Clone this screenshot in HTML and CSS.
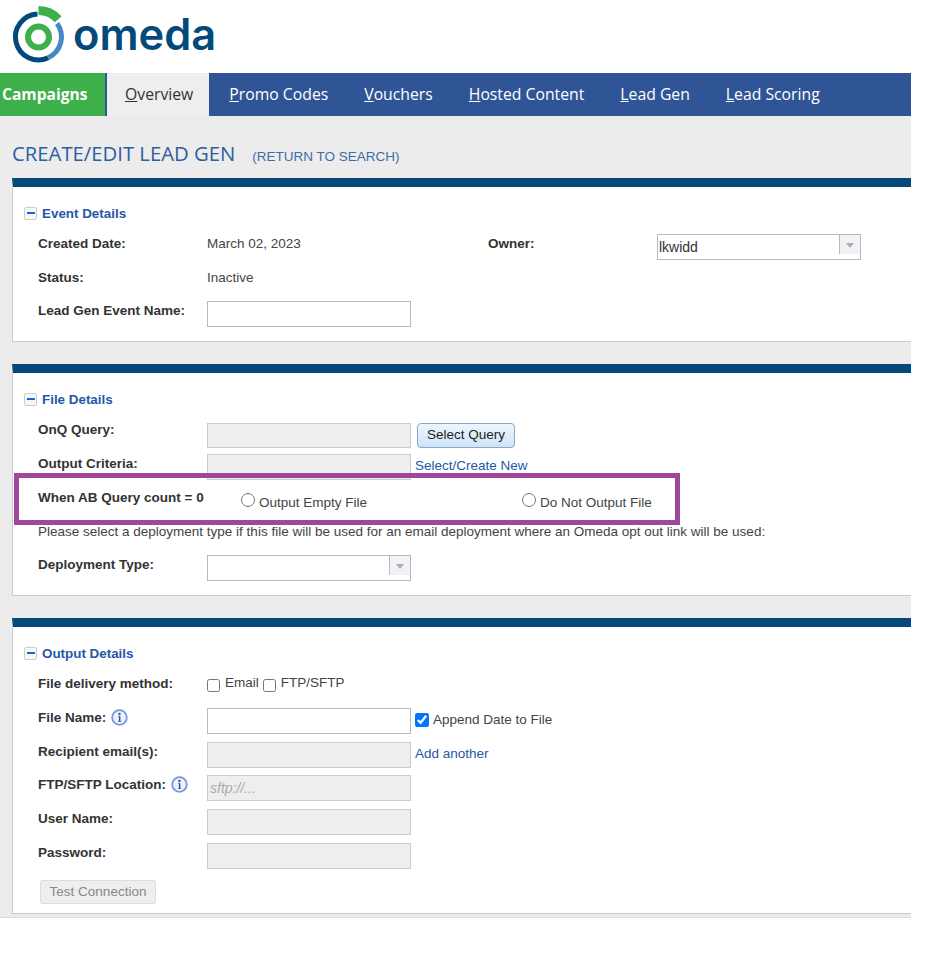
FILE: index.html
```html
<!DOCTYPE html>
<html lang="en">
<head>
    <meta charset="UTF-8">
    <title>Create/Edit Lead Gen</title>
    <link rel="stylesheet" href="styles.css">
</head>
<body>
    <div class="logo">
        <svg class="logo-mark" width="68" height="68" viewBox="0 0 68 68" fill="none">
            <path d="M48.2 57.8A23 23 0 1 1 37.5 14" stroke="#034a7a" stroke-width="5"/>
            <path d="M57.1 23.5A23 23 0 0 1 48.2 57.8" stroke="#4588c6" stroke-width="5"/>
            <path d="M38.5 10.5A26.5 26.5 0 0 1 58.2 19.3" stroke="#3eb04b" stroke-width="9"/>
            <circle cx="38.5" cy="37" r="10.5" stroke="#3eb04b" stroke-width="6"/>
        </svg>
        <span class="logo-text">omeda</span>
    </div>

    <div class="nav">
        <a class="nav-main">Campaigns</a>
        <a class="nav-tab active"><u>O</u>verview</a>
        <a class="nav-tab"><u>P</u>romo Codes</a>
        <a class="nav-tab"><u>V</u>ouchers</a>
        <a class="nav-tab"><u>H</u>osted Content</a>
        <a class="nav-tab"><u>L</u>ead Gen</a>
        <a class="nav-tab"><u>L</u>ead Scoring</a>
    </div>

    <div class="content">
        <div class="title">
            <h1>CREATE/EDIT LEAD GEN</h1>
            <a class="return-link">(RETURN TO SEARCH)</a>
        </div>

        <div class="panel">
            <h2><span class="toggle"></span>Event Details</h2>
            <div class="row">
                <label>Created Date:</label>
                <span class="value date-value">March 02, 2023</span>
                <label class="owner-label">Owner:</label>
                <div class="combo"><span class="combo-text">lkwidd</span><span class="combo-arrow"></span></div>
            </div>
            <div class="row">
                <label>Status:</label>
                <span class="value">Inactive</span>
            </div>
            <div class="row">
                <label>Lead Gen Event Name:</label>
                <input class="field" type="text">
            </div>
        </div>

        <div class="panel panel-file">
            <h2><span class="toggle"></span>File Details</h2>
            <div class="row row-query">
                <label>OnQ Query:</label>
                <input class="field" type="text" disabled>
                <button class="btn-query">Select Query</button>
            </div>
            <div class="row">
                <label>Output Criteria:</label>
                <input class="field" type="text" disabled>
                <a class="link">Select/Create New</a>
            </div>
            <div class="row highlight-row">
                <label class="wide-label">When AB Query count = 0</label>
                <input class="radio-first" type="radio" name="empty">
                <span class="radio-text">Output Empty File</span>
                <input class="radio-second" type="radio" name="empty">
                <span class="radio-text">Do Not Output File</span>
                <div class="highlight"></div>
            </div>
            <div class="row note">Please select a deployment type if this file will be used for an email deployment where an Omeda opt out link will be used:</div>
            <div class="row">
                <label>Deployment Type:</label>
                <div class="combo combo-short"><span class="combo-text"></span><span class="combo-arrow"></span></div>
            </div>
        </div>

        <div class="panel panel-last">
            <h2><span class="toggle"></span>Output Details</h2>
            <div class="row">
                <label>File delivery method:</label>
                <input class="check" type="checkbox">
                <span class="check-text">Email</span>
                <input class="check" type="checkbox">
                <span class="check-text">FTP/SFTP</span>
            </div>
            <div class="row">
                <label>File Name:<svg class="info" width="17" height="17" viewBox="0 0 17 17"><circle cx="8.5" cy="8.5" r="7.3" fill="#eef2fb" stroke="#7795dc" stroke-width="1.8"/><circle cx="8.5" cy="5" r="1.2" fill="#2a4fa8"/><path d="M7.1 7.2H9.4V11.9H10.3V12.8H6.9V11.9H7.9V8.1H7.1Z" fill="#2a4fa8"/></svg></label>
                <input class="field" type="text">
                <input class="check-append" type="checkbox" checked>
                <span class="value value-append">Append Date to File</span>
            </div>
            <div class="row">
                <label>Recipient email(s):</label>
                <input class="field" type="text" disabled>
                <a class="link">Add another</a>
            </div>
            <div class="row">
                <label>FTP/SFTP Location:<svg class="info" width="17" height="17" viewBox="0 0 17 17"><circle cx="8.5" cy="8.5" r="7.3" fill="#eef2fb" stroke="#7795dc" stroke-width="1.8"/><circle cx="8.5" cy="5" r="1.2" fill="#2a4fa8"/><path d="M7.1 7.2H9.4V11.9H10.3V12.8H6.9V11.9H7.9V8.1H7.1Z" fill="#2a4fa8"/></svg></label>
                <input class="field" type="text" placeholder="sftp://..." disabled>
            </div>
            <div class="row">
                <label>User Name:</label>
                <input class="field" type="text" disabled>
            </div>
            <div class="row">
                <label>Password:</label>
                <input class="field" type="text" disabled>
            </div>
            <button class="btn-test" disabled>Test Connection</button>
        </div>
    </div>
</body>
</html>
```

FILE: styles.css
```css
body {
    margin: 0;
    font-family: 'Liberation Sans', Arial, sans-serif;
    font-size: 14px;
    color: #333;
    background-color: #fff;
    width: 946px;
    height: 956px;
    overflow: hidden;
}
.logo {
    height: 73px;
    display: flex;
    align-items: flex-start;
}
.logo-mark {
    flex: none;
}
.logo-text {
    margin: 6px 0 0 5px;
    font-family: 'Inter', sans-serif;
    font-weight: 600;
    font-size: 43.4px;
    line-height: 56px;
    color: #034a7a;
}
.nav {
    display: flex;
    height: 43px;
    background-color: #2f5597;
    font-family: 'Open Sans', sans-serif;
    font-size: 15.75px;
    line-height: 43px;
    width: 911px;
}
.nav-main {
    width: 105px;
    box-sizing: border-box;
    padding-left: 2px;
    background-color: #3eb04b;
    color: #fff;
    font-weight: 700;
    font-size: 15.6px;
    margin-right: 2px;
}
.nav-tab {
    padding: 0 16px 0 20px;
    color: #fff;
}
.nav-tab.active {
    padding: 0 16px 0 18px;
    background-color: #eee;
    color: #333;
}
.content {
    width: 911px;
    height: 802px;
    box-sizing: border-box;
    padding: 24px 0 0 12px;
    background-color: #ececec;
    border-bottom: 1px solid #ddd;
}
.title {
    display: flex;
    align-items: baseline;
    height: 38px;
}
h1 {
    margin: 0;
    font-family: 'Open Sans', sans-serif;
    font-weight: 400;
    font-size: 20.3px;
    line-height: 27px;
    color: #2c5f9e;
}
.return-link {
    margin-left: 17px;
    font-size: 13.5px;
    color: #3f6ca8;
}
.panel {
    border-top: 9px solid #034a7a;
    border-left: 1px solid #ccc;
    border-bottom: 1px solid #ccc;
    background-color: #fff;
    padding: 18px 0 0 11px;
    height: 136px;
    margin-bottom: 22px;
}
.panel.panel-file {
    height: 204px;
}
.panel.panel-last {
    height: 268px;
    margin-bottom: 0;
}
h2 {
    display: flex;
    align-items: center;
    margin: 0 0 12px;
    height: 17px;
    font-size: 13.4px;
    color: #2557a7;
}
.toggle {
    position: relative;
    width: 11px;
    height: 11px;
    border: 1px solid #ccc;
    border-radius: 2px;
    margin-right: 5px;
    background-color: #f7f7f7;
}
.toggle::after {
    content: "";
    position: absolute;
    left: 2px;
    top: 4px;
    width: 8px;
    height: 2px;
    background-color: #1668d8;
}
.row {
    position: relative;
    display: flex;
    align-items: flex-start;
    height: 33.7px;
    padding-left: 14px;
    font-size: 13.5px;
    line-height: 16px;
}
.panel-last .row {
    height: 33.8px;
}
label {
    flex: none;
    display: flex;
    align-items: flex-start;
    width: 169px;
    padding-top: 2px;
    font-weight: 700;
    font-size: 13.5px;
    line-height: 16px;
    color: #333;
}
.field {
    flex: none;
    box-sizing: border-box;
    width: 204px;
    height: 26px;
    margin: 0;
    border: 1px solid #b5b8c8;
    background-color: #fff;
    padding: 0 2px;
    font-family: 'Liberation Sans', Arial, sans-serif;
    font-size: 14px;
}
.field:disabled {
    border: 1px solid #ccc;
    background-color: #eee;
}
.field::placeholder {
    color: #aaa;
    font-style: italic;
}
.row-query .field {
    height: 25px;
    margin-top: 3px;
}
.value {
    padding-top: 2px;
    font-size: 13.5px;
    color: #444;
}
.value-append {
    padding-top: 4px;
}
.date-value {
    width: 281px;
    flex: none;
}
.owner-label {
    width: 169px;
}
.combo {
    position: relative;
    flex: none;
    box-sizing: border-box;
    width: 204px;
    height: 26px;
    border: 1px solid #b5b8c8;
    background-color: #fff;
}
.combo-text {
    display: block;
    padding: 4px 0 0 1px;
    font-size: 14px;
    color: #333;
}
.combo-arrow {
    position: absolute;
    right: 0;
    top: 0;
    width: 20px;
    height: 19px;
    border-left: 1px solid #b5b8c8;
    background-color: #f2f2f2;
}
.combo-arrow::after {
    content: "";
    position: absolute;
    left: 6px;
    top: 8px;
    border-left: 4px solid transparent;
    border-right: 4px solid transparent;
    border-top: 5px solid #9fb0cf;
}
.btn-query {
    margin: 3px 0 0 6px;
    width: 98px;
    height: 25px;
    border: 1px solid #8aa8c8;
    border-radius: 4px;
    background: linear-gradient(#eef5fc, #cfe3f7);
    font-family: 'Liberation Sans', Arial, sans-serif;
    font-size: 13.5px;
    line-height: 21px;
    color: #222;
    padding: 0 0 2px;
}
.link {
    margin-left: 4px;
    padding-top: 4px;
    font-size: 13.5px;
    color: #2557a7;
}
.panel-file .wide-label {
    padding-top: 3px;
    white-space: nowrap;
}
.radio-first {
    width: 14px;
    height: 14px;
    margin: 6px 4px 0 34px;
}
.radio-second {
    width: 14px;
    height: 14px;
    margin: 6px 4px 0 155px;
}
.radio-text {
    padding-top: 8px;
    color: #444;
}
.highlight {
    position: absolute;
    left: -10px;
    top: -14px;
    width: 666px;
    height: 52px;
    box-sizing: border-box;
    border: 5px solid #a0479b;
    pointer-events: none;
}
.row.note {
    padding-top: 3px;
    height: 30.7px;
    color: #444;
}
.check {
    margin: 5px 5px 0 0;
    width: 13px;
    height: 13px;
}
.check-text {
    margin-right: 4px;
    padding-top: 1px;
    font-size: 13.5px;
    color: #444;
}
.info {
    margin-left: 5px;
    margin-top: -1px;
}
.check-append {
    margin: 5px 4px 0 4px;
    width: 14px;
    height: 14px;
}
.btn-test {
    display: block;
    margin: 3px 0 0 16px;
    width: 116px;
    height: 24px;
    border: 1px solid #ddd;
    border-radius: 2px;
    background-color: #eee;
    font-family: 'Liberation Sans', Arial, sans-serif;
    font-size: 13.5px;
    color: #888;
    padding: 0;
}
```
